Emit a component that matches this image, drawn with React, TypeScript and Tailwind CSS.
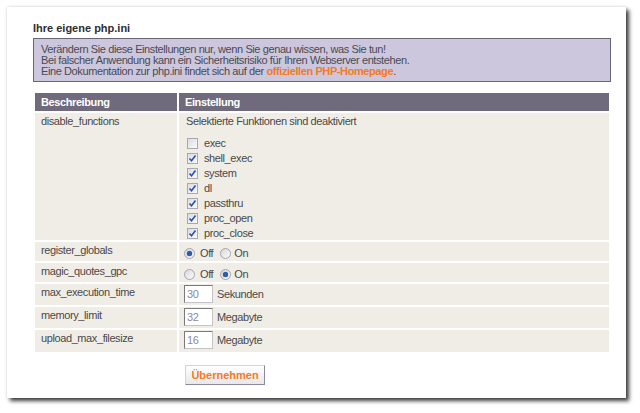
import React from "react";

const font = { fontFamily: '"Liberation Sans", Arial, sans-serif' };

function Check({ on, label }: { on: boolean; label: string }) {
  return (
    <div className="flex h-[15px] items-center">
      <span className="ml-[1px] flex h-[11px] w-[11px] items-center justify-center border border-[#a8a8b0] bg-gradient-to-br from-[#dcdce0] to-[#fbfbfb]">
        {on && (
          <svg width="9" height="9" viewBox="0 0 9 9">
            <path d="M1.5 4.5 L3.5 6.8 L7.5 1.5" fill="none" stroke="#2a4fb8" strokeWidth="1.6" />
          </svg>
        )}
      </span>
      <span className="ml-[6px]">{label}</span>
    </div>
  );
}

function Radio({ on }: { on: boolean }) {
  return (
    <span className="flex h-[11px] w-[11px] items-center justify-center rounded-full border border-[#a4a4ac] bg-gradient-to-br from-[#d8d8dc] to-[#fcfcfc]">
      {on && <span className="h-[5px] w-[5px] rounded-full bg-[#2b5cad] shadow-[0_0_1px_#1a3a80]" />}
    </span>
  );
}

function RadioPair({ off }: { off: boolean }) {
  return (
    <div className="flex h-full items-center pl-[5px] pt-[3px]">
      <Radio on={off} />
      <span className="ml-[5px]">Off</span>
      <span className="ml-[7px]">
        <Radio on={!off} />
      </span>
      <span className="ml-[3px]">On</span>
    </div>
  );
}

function NumField({ value, unit }: { value: string; unit: string }) {
  return (
    <div className="flex items-center pl-[5px] pt-[1px]">
      <span className="flex h-[18px] w-[29px] items-center border border-[#c4c4c4] border-l-[#7a7a7a] border-t-[#7a7a7a] bg-white pl-[2px] text-[#8a8aa6]">
        {value}
      </span>
      <span className="ml-[4px]">{unit}</span>
    </div>
  );
}

export default function App() {
  const funcs: [string, boolean][] = [
    ["exec", false],
    ["shell_exec", true],
    ["system", true],
    ["dl", true],
    ["passthru", true],
    ["proc_open", true],
    ["proc_close", true],
  ];

  const cellL = "bg-[#f0ede6] pl-[6px] pt-[2px] leading-[13px]";

  return (
    <div className="h-[413px] w-[640px] bg-white pl-[7px] pt-[7px] text-[11px] tracking-[-0.4px] text-[#4a4a4a]" style={font}>
      <div className="h-[391px] w-[619px] bg-white pl-[26px] pr-[15px] pt-[15px] shadow-[3px_3px_4px_rgba(0,0,0,0.75),0_0_3px_rgba(0,0,0,0.15)]">
        <h1 className="text-[11px] font-bold leading-[13px] tracking-normal text-[#2e2e2e]">Ihre eigene php.ini</h1>

        <div className="mt-[3px] border border-[#6a6478] bg-[#ccc7dc] pb-[4px] pl-[7px] pt-[5px] leading-[11px] text-[#4a4a55]">
          <p>Verändern Sie diese Einstellungen nur, wenn Sie genau wissen, was Sie tun!</p>
          <p>Bei falscher Anwendung kann ein Sicherheitsrisiko für Ihren Webserver entstehen.</p>
          <p>
            Eine Dokumentation zur php.ini findet sich auf der{" "}
            <span className="font-bold text-[#f47a1f]">offiziellen PHP-Homepage</span>.
          </p>
        </div>

        <div className="mt-[9px] grid grid-cols-[142px_430px] gap-[2px] p-[2px]">
          <div className="h-[18px] bg-[#6f6a7c] pl-[6px] font-bold leading-[18px] text-white">Beschreibung</div>
          <div className="h-[18px] bg-[#6f6a7c] pl-[6px] font-bold leading-[18px] text-white">Einstellung</div>

          <div className={`${cellL} h-[127px]`}>disable_functions</div>
          <div className="h-[127px] bg-[#f0ede6] pl-[7px] pt-[2px] leading-[13px]">
            <div>Selektierte Funktionen sind deaktiviert</div>
            <div className="mt-[8px]">
              {funcs.map(([n, on]) => (
                <Check key={n} on={on} label={n} />
              ))}
            </div>
          </div>

          <div className={`${cellL} h-[19px]`}>register_globals</div>
          <div className="h-[19px] bg-[#f0ede6]">
            <RadioPair off={true} />
          </div>

          <div className={`${cellL} h-[19px]`}>magic_quotes_gpc</div>
          <div className="h-[19px] bg-[#f0ede6]">
            <RadioPair off={false} />
          </div>

          <div className={`${cellL} h-[21px]`}>max_execution_time</div>
          <div className="h-[21px] bg-[#f0ede6]">
            <NumField value="30" unit="Sekunden" />
          </div>

          <div className={`${cellL} h-[21px]`}>memory_limit</div>
          <div className="h-[21px] bg-[#f0ede6]">
            <NumField value="32" unit="Megabyte" />
          </div>

          <div className={`${cellL} h-[22px]`}>upload_max_filesize</div>
          <div className="h-[22px] bg-[#f0ede6]">
            <NumField value="16" unit="Megabyte" />
          </div>
        </div>

        <button className="ml-[152px] mt-[11px] h-[20px] w-[80px] border border-[#d4d4d4] border-b-[#8a8a9a] border-r-[#8a8a9a] bg-gradient-to-b from-white to-[#e8e8ec] text-[11px] font-bold tracking-normal text-[#f47a1f]">
          Übernehmen
        </button>
      </div>
    </div>
  );
}
